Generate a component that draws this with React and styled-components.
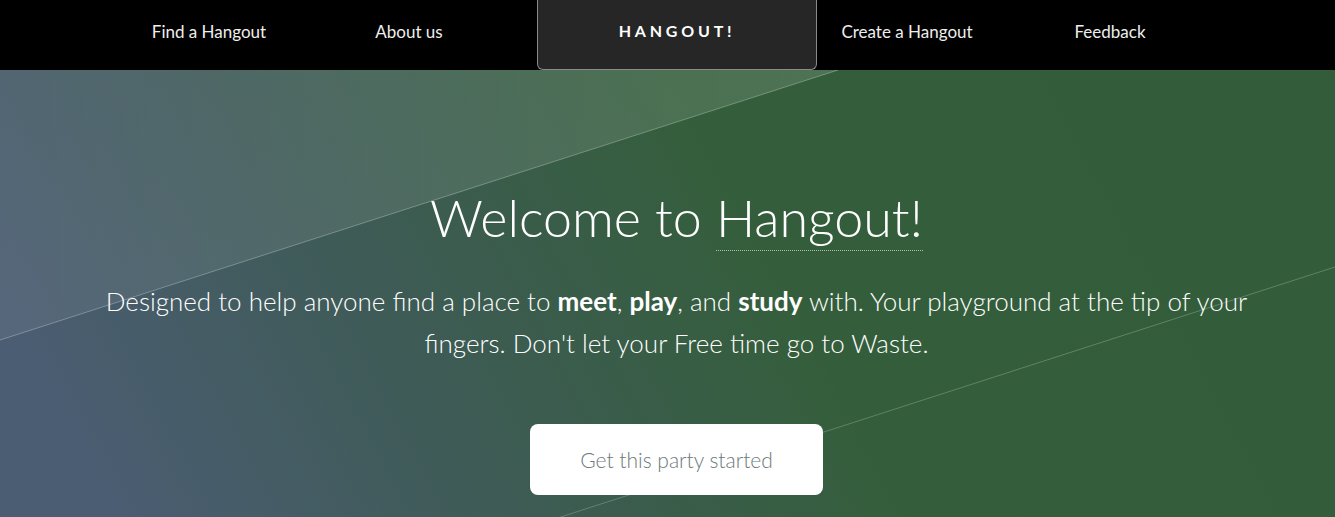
import styled, { createGlobalStyle } from "styled-components";

const GlobalStyle = createGlobalStyle`
  body {
    margin: 0;
    background: #000;
    font-family: "Lato", "Open Sans", sans-serif;
    overflow: hidden;
  }
`;

const NavBar = styled.nav`
  height: 70px;
  background: #000;
  display: flex;
  align-items: stretch;
  padding-left: 109px;
  position: relative;
  z-index: 2;
`;

const NavLink = styled.a`
  width: ${(p) => p.w}px;
  display: flex;
  align-items: center;
  justify-content: center;
  color: #eee;
  font-size: 17px;
  text-decoration: none;
  padding-bottom: 8px;
`;

const Brand = styled.a`
  width: 280px;
  margin-left: 28px;
  box-sizing: border-box;
  display: flex;
  align-items: center;
  justify-content: center;
  background: #262626;
  border: 1px solid #8a8a8a;
  border-top: none;
  border-radius: 0 0 6px 6px;
  color: #fff;
  font-size: 16px;
  font-weight: 700;
  letter-spacing: 3.8px;
  text-decoration: none;
  padding-bottom: 8px;
`;

const Hero = styled.header`
  position: relative;
  height: 460px;
  overflow: hidden;
  background: linear-gradient(62deg, #4b5d72 8%, #3f5b58 30%, #345e3b 58%, #335d3a 100%);
`;

const Decor = styled.svg`
  position: absolute;
  inset: 0;
  width: 100%;
  height: 100%;
`;

const Content = styled.div`
  position: relative;
  display: flex;
  flex-direction: column;
  align-items: center;
  padding: 115px 0 0 18px;
  color: #fff;
  text-align: center;
`;

const Title = styled.h1`
  margin: 0;
  font-size: 52px;
  font-weight: 300;
  line-height: 64px;
`;

const Underlined = styled.span`
  border-bottom: 1px dotted rgba(255, 255, 255, 0.6);
  padding-bottom: 2px;
`;

const Lead = styled.p`
  margin: 31px 0 0;
  max-width: 1170px;
  font-size: 26px;
  font-weight: 300;
  line-height: 42px;

  b {
    font-weight: 700;
  }
`;

const CtaButton = styled.a`
  margin-top: 60px;
  width: 293px;
  height: 71px;
  display: flex;
  align-items: center;
  justify-content: center;
  background: #fff;
  border-radius: 8px;
  color: #6b7a7a;
  font-size: 21px;
  font-weight: 300;
  text-decoration: none;
`;

export default function App() {
  return (
    <>
      <GlobalStyle />
      <NavBar>
        <NavLink w={200}>Find a Hangout</NavLink>
        <NavLink w={200}>About us</NavLink>
        <Brand>HANGOUT!</Brand>
        <NavLink w={180}>Create a Hangout</NavLink>
        <NavLink w={226}>Feedback</NavLink>
      </NavBar>
      <Hero>
        <Decor viewBox="0 0 1335 460" preserveAspectRatio="none">
          <defs>
            <linearGradient id="shine" x1="0" y1="0" x2="1" y2="0">
              <stop offset="0" stopColor="#fff" stopOpacity="0.06" />
              <stop offset="1" stopColor="#fff" stopOpacity="0.13" />
            </linearGradient>
          </defs>
          <polygon points="0,0 838,0 0,270" fill="url(#shine)" />
          <line x1="838" y1="0" x2="0" y2="270" stroke="#fff" strokeOpacity="0.28" />
          <line x1="1335" y1="197" x2="0" y2="628" stroke="#fff" strokeOpacity="0.22" />
        </Decor>
        <Content>
          <Title>
            Welcome to <Underlined>Hangout!</Underlined>
          </Title>
          <Lead>
            Designed to help anyone find a place to <b>meet</b>, <b>play</b>, and{" "}
            <b>study</b> with. Your playground at the tip of your fingers. Don't let
            your Free time go to Waste.
          </Lead>
          <CtaButton>Get this party started</CtaButton>
        </Content>
      </Hero>
    </>
  );
}
